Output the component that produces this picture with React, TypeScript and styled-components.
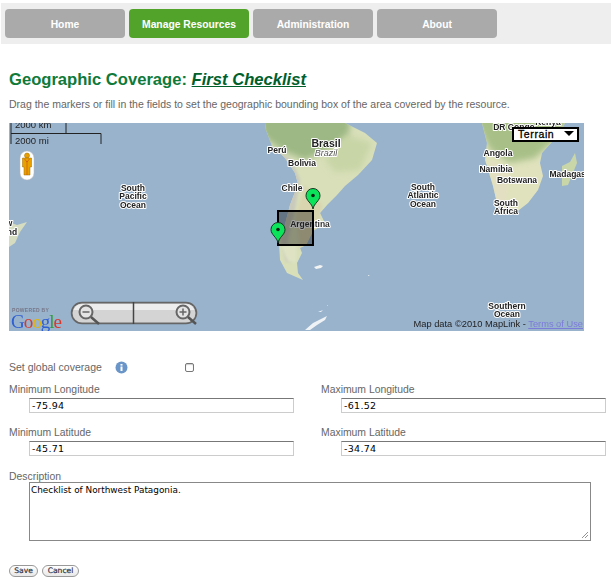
import React from "react";
import styled, { createGlobalStyle } from "styled-components";

const Global = createGlobalStyle`
  html, body { margin: 0; padding: 0; background: #fff; overflow: hidden; }
  body { font-family: "Liberation Sans", Arial, sans-serif; color: #666; }
`;
const Page = styled.div`width: 611px; height: 580px; overflow: hidden;`;
const Nav = styled.nav`
  margin: 3px 0 0 1px; height: 41px; box-sizing: border-box; padding: 6px 0 0 4px;
  background: #eee; display: flex; gap: 4px;
`;
const NavItem = styled.a<{ $active?: boolean }>`
  width: 120px; height: 29px; box-sizing: border-box; padding-top: 1px; border-radius: 4px;
  display: flex; align-items: center; justify-content: center;
  background: ${(p) => (p.$active ? "#52a32a" : "#aaaaaa")}; color: #fff; font-size: 10.3px; font-weight: bold;
`;
const Content = styled.main`padding: 25px 0 0 9px;`;
const Title = styled.h1`
  margin: 0; font-size: 16.6px; line-height: 22px; font-weight: bold; color: #0f7a3a;
`;
const TitleLink = styled.a`color: #00602b; font-style: italic; text-decoration: underline;`;
const Intro = styled.p`margin: 6px 0 0; font-size: 10.5px; line-height: 14px; color: #666;`;
const MapBox = styled.div`
  position: relative; margin-top: 12px; width: 575px; height: 208px; overflow: hidden; background: #99b3cd;
`;
const MapArt = styled.svg`display: block; width: 575px; height: 208px;`;
const TypeSelect = styled.div`
  position: absolute; left: 503px; top: 4px; width: 67px; height: 15px; box-sizing: border-box;
  border: 2px solid #000; background: #fff; color: #000; font-size: 10.5px; letter-spacing: .6px;
  -webkit-text-stroke: .3px #000; line-height: 11px; padding-left: 4px;
`;
const Caret = styled.span`
  position: absolute; right: 3px; top: 2px; width: 0; height: 0;
  border-left: 5px solid transparent; border-right: 5px solid transparent; border-top: 5px solid #000;
`;
const Attribution = styled.div`
  position: absolute; right: 1px; bottom: 1px; font-size: 9.3px; line-height: 12px; color: #222; white-space: nowrap;
`;
const TermsLink = styled.a`color: #7b7bd8; text-decoration: underline;`;
const GoogleMark = styled.div`position: absolute; left: 2px; bottom: 1px; width: 52px;`;
const Powered = styled.div`font-size: 5px; line-height: 5px; font-weight: bold; color: #778; letter-spacing: .3px; margin-left: 1px;`;
const Logo = styled.div`font-family: "Liberation Serif", serif; font-size: 19px; line-height: 17px; letter-spacing: -1px;`;
const Letter = styled.span<{ $c: string }>`color: ${(p) => p.$c};`;
const GlobalRow = styled.div`
  margin-top: 29px; height: 14px; display: flex; align-items: center; font-size: 10.5px; color: #666;
`;
const GlobalLabel = styled.span`width: 106px;`;
const InfoIcon = styled.svg`width: 13px; height: 13px; flex: none;`;
const Check = styled.span`
  margin-left: 57px; width: 7px; height: 7px; border: 1px solid #777; border-radius: 2px; background: #fff;
  box-shadow: inset 0 1px 1px #ccc;
`;
const FieldGrid = styled.div`
  margin-top: 9px; display: grid; grid-template-columns: 312px 285px; row-gap: 13px;
`;
const Field = styled.div`display: flex; flex-direction: column;`;
const FieldLabel = styled.label`display: block; font-size: 10.4px; line-height: 13px; color: #666; height: 13px;`;
const DescLabel = styled(FieldLabel)`line-height: 15px;`;
const TextInput = styled.div`
  margin: 2px 0 0 20px; width: 265px; height: 15px; box-sizing: border-box; background: #fff; color: #000;
  border: 1px solid #ccc; border-top: 1px solid #777; font: 9.5px/13px "DejaVu Sans", sans-serif;
  padding-left: 2px; letter-spacing: .3px;
`;
const DescBlock = styled.div`margin-top: 13px;`;
const TextArea = styled.div`
  position: relative; margin: 0 0 0 20px; width: 562px; height: 59px; box-sizing: border-box; background: #fff; color: #000;
  border: 1px solid #888; font: 8.9px/13px "DejaVu Sans", sans-serif; padding: 1px 1px;
`;
const Grip = styled.svg`position: absolute; right: 1px; bottom: 1px; width: 8px; height: 8px;`;
const Actions = styled.div`margin-top: 24px; display: flex; gap: 4px;`;
const Btn = styled.button<{ $w: number }>`
  width: ${(p) => p.$w}px; height: 12px; padding: 0; box-sizing: border-box; border: 1px solid #999; border-radius: 6px;
  background: linear-gradient(#fff, #e8e8e8); color: #334; font: 7.6px/10px "DejaVu Sans", sans-serif;
  -webkit-text-stroke: .2px #334;
`;

const LABEL = { fontFamily: "Liberation Sans", stroke: "#fff", strokeWidth: 2, paintOrder: "stroke", strokeLinejoin: "round" } as const;

const Lab = ({ x, y, s = 8.5, c, i, w, children }: { x: number; y: number; s?: number; c?: string; i?: boolean; w?: number; children: string }) => (
  <text x={x - 9} y={y - 123} fontSize={s} textAnchor="middle" style={{ ...LABEL, fill: c || "#222", fontStyle: i ? "italic" : "normal", fontWeight: w || 700 }}>{children}</text>
);

const Pin = ({ x, y }: { x: number; y: number }) => (
  <g transform={`translate(${x - 9} ${y - 123})`}>
    <path d="M0 0C-1-6-7-8-7-13.500a7 7 0 0 1 14 0C7-8 1-6 0 0Z" fill="#0be35b" stroke="#16351f" strokeWidth="1" />
    <circle cx="0" cy="-13.500" r="1.800" fill="#0a2212" />
  </g>
);

const Terrain = () => (
  <MapArt viewBox="0 0 575 208">
    <defs>
      <filter id="soft"><feGaussianBlur stdDeviation="0.6" /></filter>
      <filter id="wide" x="-30%" y="-30%" width="160%" height="160%"><feGaussianBlur stdDeviation="3" /></filter>
      <filter id="mid"><feGaussianBlur stdDeviation="1.500" /></filter>
      <clipPath id="saClip"><path d="M265 123L266 130 272 146 285 158 295 173 298 184 290 205 284 228 279 243 280 260 287 273 303 280 298 273 297 263 302 253 300 248 306 245 313 231 325 223 320 213 328 204 337 195 345 186 358 175 372 160 377 143 365 133 345 123Z" /></clipPath>
      <clipPath id="afClip"><path d="M482 123L487 143 485 160 493 186 497 203 502 213 515 213 528 203 538 190 543 176 540 163 542 153 560 133 565 123Z" /></clipPath>
    </defs>
    <rect width="575" height="208" fill="#99b3cd" />
    <g transform="translate(-9 -123)">
      <g filter="url(#soft)">
        <g clipPath="url(#saClip)">
          <rect x="260" y="120" width="125" height="170" fill="#d8dfb9" />
          <path d="M255 110H352L348 138 328 150 305 160 285 152 265 138Z" fill="#9db884" filter="url(#wide)" />
          <path d="M345 135L372 143 360 170 335 172 325 160Z" fill="#c8d5a6" filter="url(#wide)" />
          <path d="M276 150L292 160 300 180 296 205 288 240 292 262 286 262 280 240 286 205 292 180Z" fill="#c9c9bc" filter="url(#mid)" />
          <path d="M305 185L322 205 315 245 300 250 296 215Z" fill="#d9d5ae" filter="url(#mid)" />
          <path d="M280 245L296 245 296 262 288 262Z" fill="#dfe3c4" filter="url(#mid)" />
        </g>
        <g clipPath="url(#afClip)">
          <rect x="478" y="120" width="95" height="100" fill="#dfe2bc" />
          <path d="M470 110H575L555 140 535 158 510 163 490 150Z" fill="#a8c088" filter="url(#wide)" />
          <path d="M490 160L510 170 505 205 495 200Z" fill="#e3dfc2" filter="url(#mid)" />
        </g>
        <path d="M575 153L577 163 568 185 562 186 562 166 570 162Z" fill="#c9d6a8" />
        <path d="M9 222L17 225 27 222 20 232 15 243 9 247Z" fill="#d6dcc0" />
        <path d="M314 267l6-2 3 1-2 2-5 1ZM368 275l2 1-2 0Z" fill="#f2f4f4" />
        <path d="M305 330l8-7 6-3 8-4-2 4-8 5-7 5ZM318 312l5-2-2 2ZM327 306l1-1 0 1Z" fill="#f0f3f6" />
      </g>
    </g>
    <Lab x={277} y={153}>Perú</Lab>
    <Lab x={326} y={147} s={10.500}>Brasil</Lab>
    <Lab x={326} y={156} s={9} c="#555" i w={400}>Brazil</Lab>
    <Lab x={302} y={166}>Bolivia</Lab>
    <Lab x={292} y={191}>Chile</Lab>
    <Lab x={310} y={227} c="#333">Argentina</Lab>
    <Lab x={133} y={190.500}>South</Lab>
    <Lab x={133} y={199}>Pacific</Lab>
    <Lab x={133} y={207.500}>Ocean</Lab>
    <Lab x={423} y={190}>South</Lab>
    <Lab x={423} y={198}>Atlantic</Lab>
    <Lab x={423} y={206.500}>Ocean</Lab>
    <Lab x={514} y={130}>DR Congo</Lab>
    <Lab x={548} y={125}>Kenya</Lab>
    <Lab x={498} y={156}>Angola</Lab>
    <Lab x={496} y={172}>Namibia</Lab>
    <Lab x={517} y={183}>Botswana</Lab>
    <Lab x={506} y={206}>South</Lab>
    <Lab x={506} y={214}>Africa</Lab>
    <Lab x={574} y={177}>Madagascar</Lab>
    <Lab x={507} y={309}>Southern</Lab>
    <Lab x={507} y={317}>Ocean</Lab>
    <Lab x={9} y={226}>w</Lab>
    <Lab x={12} y={235}>nd</Lab>

    <rect x="269" y="88" width="35" height="34" fill="#000" fillOpacity=".35" stroke="#000" strokeWidth="2" />
    <Pin x={278} y={243} />
    <Pin x={313} y={209} />

    <text x="6" y="5" fontSize="9.500" fill="#222" fontFamily="Liberation Sans">2000 km</text>
    <text x="6" y="21" fontSize="9.500" fill="#222" fontFamily="Liberation Sans">2000 mi</text>
    <g stroke="#222" strokeWidth="1" fill="none">
      <path d="M2 0V21M2 10.500H92M57 0V10M92 10.500V21" />
    </g>

    <rect x="11" y="28" width="14" height="29" rx="7" fill="#fff" stroke="#bbb" strokeWidth=".5" />
    <g transform="translate(18 30)" fill="#e8a000" stroke="#a06a00" strokeWidth=".5">
      <circle cx="0" cy="2.500" r="2.500" />
      <path d="M-4.500 5H4.500V14H3V22H-3V14H-4.500Z" />
      <path d="M0 8V22M-2.500 6L0 9 2.500 6" stroke="#c0392b" fill="none" />
    </g>

    <rect x="62.500" y="179.500" width="125" height="21" rx="10.500" fill="#6c6c6c" />
    <rect x="62.500" y="179.500" width="125" height="21" rx="10.500" fill="none" stroke="#666" strokeWidth="1.500" />
    <path d="M73 180.500H177a9.500 9.500 0 0 1 0 19H73a9.500 9.500 0 0 1 0-19Z" fill="#d4d4d4" />
    <path d="M73 181H177a9 9 0 0 1 8.500 6H64.500a9 9 0 0 1 8.500-6Z" fill="#f2f2f2" opacity=".8" />
    <path d="M124.500 179V201" stroke="#444" strokeWidth="1.500" />
    <g fill="#e4e4e4" stroke="#666" strokeWidth="2">
      <circle cx="77" cy="189" r="6.500" />
      <circle cx="174" cy="189" r="6.500" />
    </g>
    <g stroke="#666" strokeWidth="1.500" fill="none">
      <path d="M73.500 189H80.500M170.500 189H177.500M174 185.500V192.500" />
    </g>
    <path d="M82 194L90 201M179 194L187 201" stroke="#555" strokeWidth="2.500" fill="none" />
  </MapArt>
);

export default function App() {
  return (
    <Page>
      <Global />
      <Nav>
        <NavItem>Home</NavItem>
        <NavItem $active>Manage Resources</NavItem>
        <NavItem>Administration</NavItem>
        <NavItem>About</NavItem>
      </Nav>
      <Content>
        <Title>Geographic Coverage: <TitleLink>First Checklist</TitleLink></Title>
        <Intro>Drag the markers or fill in the fields to set the geographic bounding box of the area covered by the resource.</Intro>
        <MapBox>
          <Terrain />
          <TypeSelect>Terrain<Caret /></TypeSelect>
          <GoogleMark>
            <Powered>POWERED BY</Powered>
            <Logo>
              <Letter $c="#2f5fd0">G</Letter><Letter $c="#d8382c">o</Letter><Letter $c="#e6b400">o</Letter><Letter $c="#2f5fd0">g</Letter><Letter $c="#2f9e3f">l</Letter><Letter $c="#d8382c">e</Letter>
            </Logo>
          </GoogleMark>
          <Attribution>Map data ©2010 MapLink - <TermsLink>Terms of Use</TermsLink></Attribution>
        </MapBox>
        <GlobalRow>
          <GlobalLabel>Set global coverage</GlobalLabel>
          <InfoIcon viewBox="0 0 13 13">
            <circle cx="6.500" cy="6.500" r="6" fill="#6a95c8" />
            <rect x="5.500" y="5.500" width="2" height="4.500" fill="#fff" />
            <rect x="5.500" y="3" width="2" height="1.600" fill="#fff" />
          </InfoIcon>
          <Check />
        </GlobalRow>
        <FieldGrid>
          <Field><FieldLabel>Minimum Longitude</FieldLabel><TextInput>-75.94</TextInput></Field>
          <Field><FieldLabel>Maximum Longitude</FieldLabel><TextInput>-61.52</TextInput></Field>
          <Field><FieldLabel>Minimum Latitude</FieldLabel><TextInput>-45.71</TextInput></Field>
          <Field><FieldLabel>Maximum Latitude</FieldLabel><TextInput>-34.74</TextInput></Field>
        </FieldGrid>
        <DescBlock>
          <DescLabel>Description</DescLabel>
          <TextArea>
            Checklist of Northwest Patagonia.
            <Grip viewBox="0 0 8 8"><path d="M1 7L7 1M4 7L7 4" stroke="#777" strokeWidth=".8" /></Grip>
          </TextArea>
        </DescBlock>
        <Actions>
          <Btn $w={29}>Save</Btn>
          <Btn $w={37}>Cancel</Btn>
        </Actions>
      </Content>
    </Page>
  );
}
